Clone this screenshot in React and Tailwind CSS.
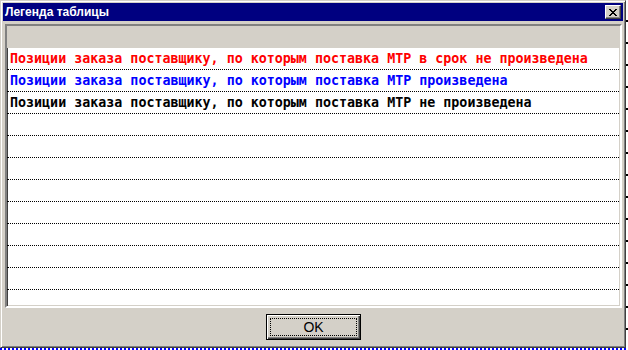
import React from 'react'

const rows = [
  { text: 'Позиции заказа поставщику, по которым поставка МТР в срок не произведена', color: 'text-[#ff0000]' },
  { text: 'Позиции заказа поставщику, по которым поставка МТР произведена', color: 'text-[#0000ff]' },
  { text: 'Позиции заказа поставщику, по которым поставка МТР не произведена', color: 'text-black' },
  ...Array.from({ length: 9 }, () => ({ text: '', color: '' }))
]

const App = () => {
  return (
    <div className="w-[628px] h-[350px] bg-white overflow-hidden flex flex-col">
      <div className="flex h-[348px]">
        {/* Dialog */}
        <div className="w-[626px] h-[348px] bg-[#d4d0c8] border border-t-[#d4d0c8] border-l-[#d4d0c8] border-r-[#404040] border-b-[#404040] shadow-[inset_1px_1px_#ffffff,inset_-1px_-1px_#808080] p-[2px] flex flex-col">
          {/* Title bar */}
          <div className="h-[18px] bg-[#000080] flex items-center justify-between pl-[2px] pr-[2px]">
            <span className="text-white font-bold text-[12px] leading-none font-['Liberation_Sans',sans-serif]">Легенда таблицы</span>
            <div className="w-[16px] h-[14px] bg-[#d4d0c8] border border-t-white border-l-white border-r-[#404040] border-b-[#404040] shadow-[inset_-1px_-1px_#808080] flex items-center justify-center">
              <svg width="8" height="7" viewBox="0 0 8 7">
                <path d="M0 0h2v1h1v1h2V1h1V0h2v1H7v1H6v1H5v1h1v1h1v1h1v1H6V6H5V5H3v1H2v1H0V6h1V5h1V4h1V3H2V2H1V1H0z" fill="#000" />
              </svg>
            </div>
          </div>

          {/* List panel */}
          <div className="mt-[3px] ml-[2px] mr-[1px] h-[284px] border-2 border-t-[#808080] border-l-[#808080] border-r-white border-b-white shadow-[inset_1px_1px_#404040,inset_-1px_-1px_#d4d0c8] bg-white flex flex-col overflow-hidden">
            <div className="h-[22px] shrink-0 bg-[#d4d0c8]" />
            {rows.map((row, i) => (
              <div
                key={i}
                className="h-[22px] shrink-0 border-b border-dotted border-black mr-[1px] flex items-center pl-[3px]"
              >
                <span className={`font-bold text-[13.33px] leading-none whitespace-pre font-['DejaVu_Sans_Mono',monospace] ${row.color}`}>
                  {row.text}
                </span>
              </div>
            ))}
          </div>

          {/* Footer */}
          <div className="flex-1 flex justify-center pt-[6px]">
            <button className="w-[95px] h-[26px] bg-[#d4d0c8] border border-black shadow-[inset_1px_1px_#ffffff,inset_-1px_-1px_#404040,inset_-2px_-2px_#808080] p-[3px] ml-[1px]">
              <div className="w-full h-full border border-dotted border-black flex items-center justify-center">
                <span className="text-[14px] leading-none text-black font-['Liberation_Sans',sans-serif]">OK</span>
              </div>
            </button>
          </div>
        </div>

        {/* Background window, right edge */}
        <div className="w-[2px] h-full bg-[repeating-linear-gradient(to_bottom,#ffffff_0px,#ffffff_20px,#000000_20px,#000000_22px)]" />
      </div>

      {/* Background window, bottom edge */}
      <div className="h-[2px] bg-[repeating-linear-gradient(to_right,#0000ff_0px,#0000ff_2px,#ffffff_2px,#ffffff_4px)]" />
    </div>
  )
}

export default App
